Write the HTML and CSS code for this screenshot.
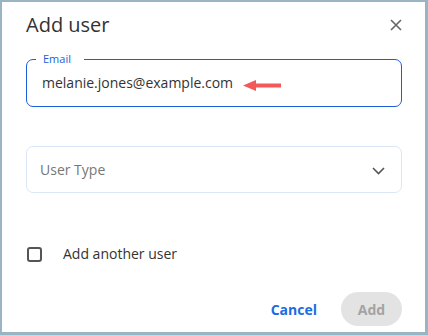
FILE: index.html
```html
<!DOCTYPE html>
<html lang="en">
<head>
<meta charset="utf-8">
<title>Add user</title>
<link rel="stylesheet" href="styles.css">
</head>
<body>
<div class="dialog">
  <div class="header">
    <h1 class="title">Add user</h1>
    <button class="close" aria-label="Close">
      <svg width="12" height="12" viewBox="0 0 12 12"><path d="M1 1L11 11M11 1L1 11" stroke="#666" stroke-width="1.6" fill="none"/></svg>
    </button>
  </div>
  <div class="field field-active">
    <span class="float-label">Email</span>
    <span class="value">melanie.jones@example.com</span>
    <svg class="arrow" width="38" height="11" viewBox="0 0 38 11"><polygon points="0,5.5 13,0 13,11" fill="#f45858"/><rect x="12" y="3.5" width="26" height="4" fill="#f45858"/></svg>
  </div>
  <div class="field field-select">
    <span class="placeholder">User Type</span>
    <svg class="chevron" width="13" height="8" viewBox="0 0 13 8"><polyline points="1,1 6.5,6.5 12,1" stroke="#555" stroke-width="1.6" fill="none"/></svg>
  </div>
  <label class="check-row">
    <span class="checkbox"></span>
    <span class="check-label">Add another user</span>
  </label>
  <div class="footer">
    <button class="btn-cancel">Cancel</button>
    <button class="btn-add" disabled>Add</button>
  </div>
</div>
</body>
</html>
```
FILE: styles.css
```css
html, body {
  margin: 0;
  padding: 0;
  background: #99b4c2;
  height: 100%;
}
body {
  font-family: "Open Sans", "Noto Sans", sans-serif;
  color: #333;
}
.dialog {
  margin: 2px 3px 3px 2px;
  height: 330px;
  box-sizing: border-box;
  background: #fff;
  padding: 9px 23px 0 24px;
  display: flex;
  flex-direction: column;
}
.header {
  display: flex;
  align-items: center;
  justify-content: space-between;
  height: 28px;
}
.title {
  margin: 0;
  font-size: 20px;
  font-weight: 400;
  line-height: 28px;
  color: #333;
}
.close {
  border: 0;
  background: none;
  padding: 0;
  margin-right: 0;
  width: 12px;
  height: 12px;
  display: flex;
}
.field {
  box-sizing: border-box;
  display: flex;
  align-items: center;
  border-radius: 7px;
  position: relative;
}
.field-active {
  margin-top: 20px;
  height: 48px;
  border: 1px solid #1b5ed6;
  padding: 0 15px;
}
.float-label {
  position: absolute;
  left: 9px;
  top: -9px;
  background: #fff;
  padding: 0 13px 0 7px;
  font-size: 11px;
  line-height: 16px;
  color: #1b5ed6;
}
.value {
  font-size: 14px;
  line-height: 20px;
  color: #333;
}
.arrow {
  margin-left: 10px;
  margin-top: 4px;
}
.field-select {
  margin-top: 39px;
  height: 47px;
  border: 1px solid #dbe6f7;
  padding: 0 16px 0 13px;
  justify-content: space-between;
}
.placeholder {
  font-size: 14px;
  line-height: 20px;
  color: #777;
}
.chevron {
  margin-top: 3px;
}
.check-row {
  margin-top: 49px;
  height: 24px;
  display: flex;
  align-items: center;
  padding-left: 1px;
}
.checkbox {
  width: 15px;
  height: 15px;
  box-sizing: border-box;
  border: 2px solid #555;
  border-radius: 3px;
}
.check-label {
  margin-left: 21px;
  font-size: 14px;
  line-height: 20px;
  color: #333;
}
.footer {
  margin-top: 26px;
  display: flex;
  justify-content: flex-end;
  align-items: center;
}
.btn-cancel {
  border: 0;
  background: none;
  padding: 0;
  font-family: inherit;
  font-size: 14px;
  font-weight: 700;
  color: #1d6be0;
  margin-right: 24px;
}
.btn-add {
  border: 0;
  width: 61px;
  height: 34px;
  border-radius: 17px;
  background: #e3e3e3;
  font-family: inherit;
  font-size: 14px;
  font-weight: 700;
  color: #a3a3a3;
  padding: 0;
}
```
